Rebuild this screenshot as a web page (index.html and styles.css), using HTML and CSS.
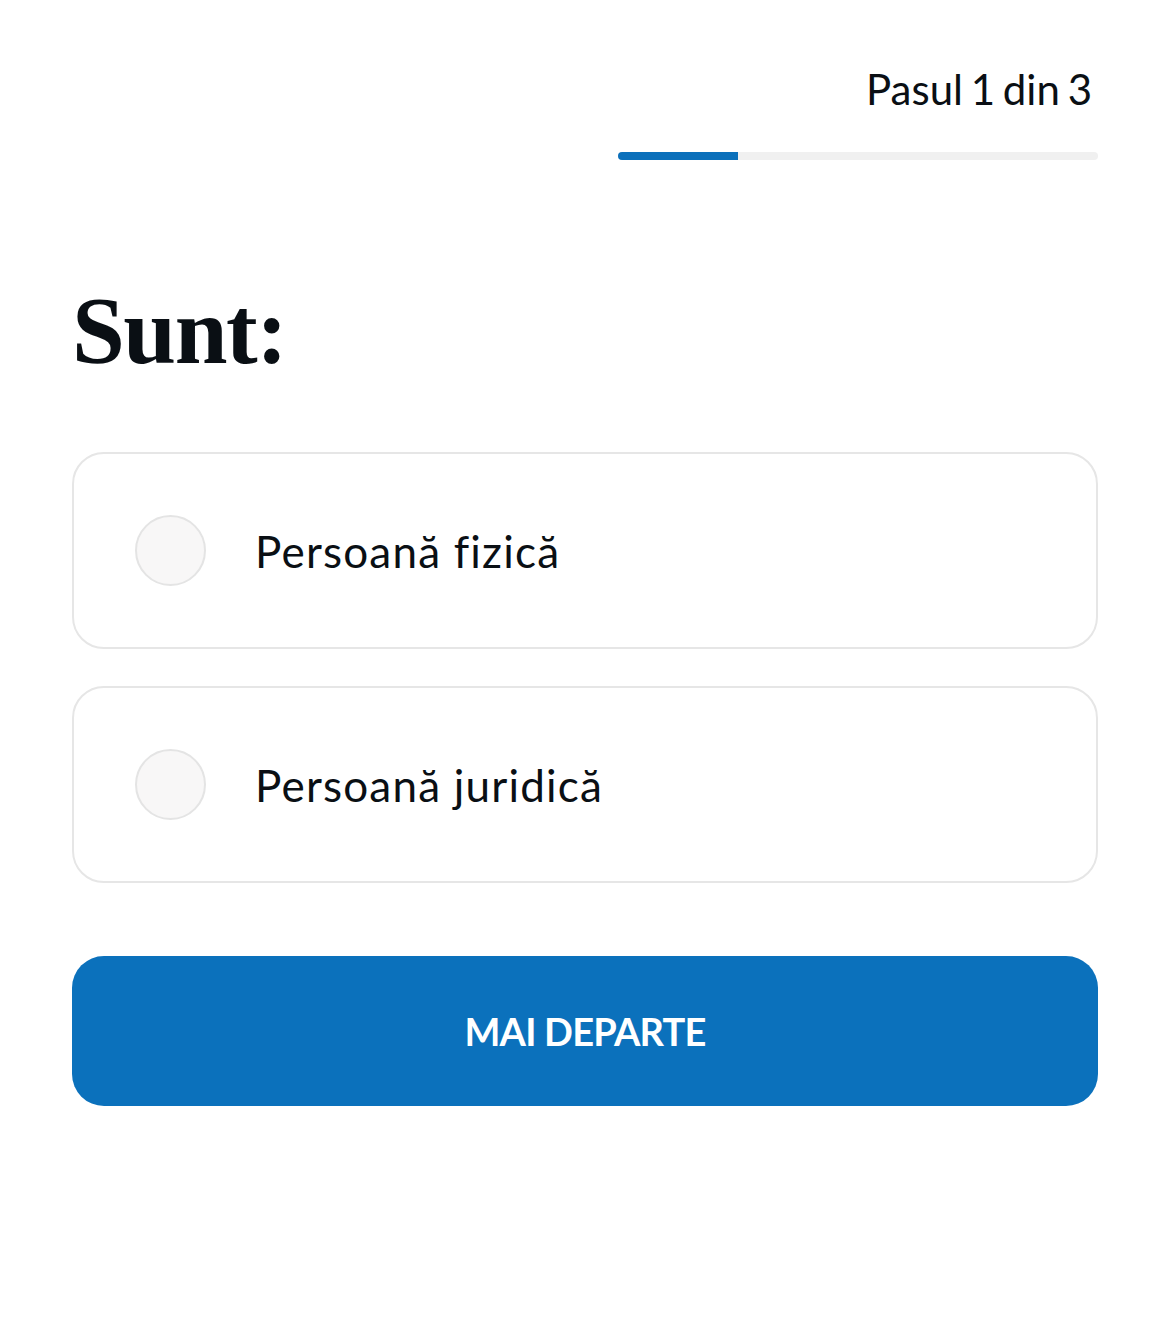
FILE: index.html
```html
<!DOCTYPE html>
<html lang="ro">
<head>
<meta charset="utf-8">
<title>Sunt</title>
<link rel="stylesheet" href="styles.css">
</head>
<body>
<main class="page">
  <header class="progress">
    <div class="step">Pasul 1 din 3</div>
    <div class="track"><div class="fill"></div></div>
  </header>
  <h1 class="title">Sunt:</h1>
  <div class="options">
    <label class="option">
      <span class="radio"></span>
      <span class="label">Persoană fizică</span>
    </label>
    <label class="option">
      <span class="radio"></span>
      <span class="label">Persoană juridică</span>
    </label>
  </div>
  <button class="next" type="button">MAI DEPARTE</button>
</main>
</body>
</html>
```
FILE: styles.css
```css
html, body {
  margin: 0;
  padding: 0;
  background: #ffffff;
}
body {
  font-family: "Lato", "Open Sans", sans-serif;
  color: #0a0f14;
}
.page {
  padding: 62px 71px 0 72px;
  display: flex;
  flex-direction: column;
}
.progress {
  display: flex;
  flex-direction: column;
  align-items: flex-end;
}
.step {
  font-size: 42px;
  line-height: 54px;
  padding-right: 6px;
  word-spacing: -3px;
  letter-spacing: 0px;
}
.track {
  margin-top: 36px;
  width: 480px;
  height: 8px;
  border-radius: 4px;
  background: #f0f0f0;
  overflow: hidden;
}
.fill {
  width: 25%;
  height: 100%;
  background: #0b70bb;
}
.title {
  margin: 116px 0 0 0;
  font-family: "Liberation Serif", serif;
  font-weight: 700;
  font-size: 95px;
  line-height: 110px;
  letter-spacing: -1.5px;
  color: #0a0f14;
}
.options {
  margin-top: 66px;
  display: flex;
  flex-direction: column;
  gap: 37px;
}
.option {
  height: 193px;
  border: 2px solid #e6e6e6;
  border-radius: 32px;
  display: flex;
  align-items: center;
  padding-left: 61px;
}
.radio {
  width: 67px;
  height: 67px;
  border: 2px solid #e4e4e4;
  border-radius: 50%;
  background: #f8f7f7;
  flex: none;
}
.label {
  margin-left: 49px;
  font-size: 44px;
  letter-spacing: 1.2px;
  color: #0a0f14;
}
.next {
  margin-top: 73px;
  height: 150px;
  border: none;
  border-radius: 32px;
  background: #0b71bc;
  color: #ffffff;
  font-family: "Lato", "Open Sans", sans-serif;
  font-weight: 700;
  font-size: 38px;
  letter-spacing: -0.8px;
}
```
